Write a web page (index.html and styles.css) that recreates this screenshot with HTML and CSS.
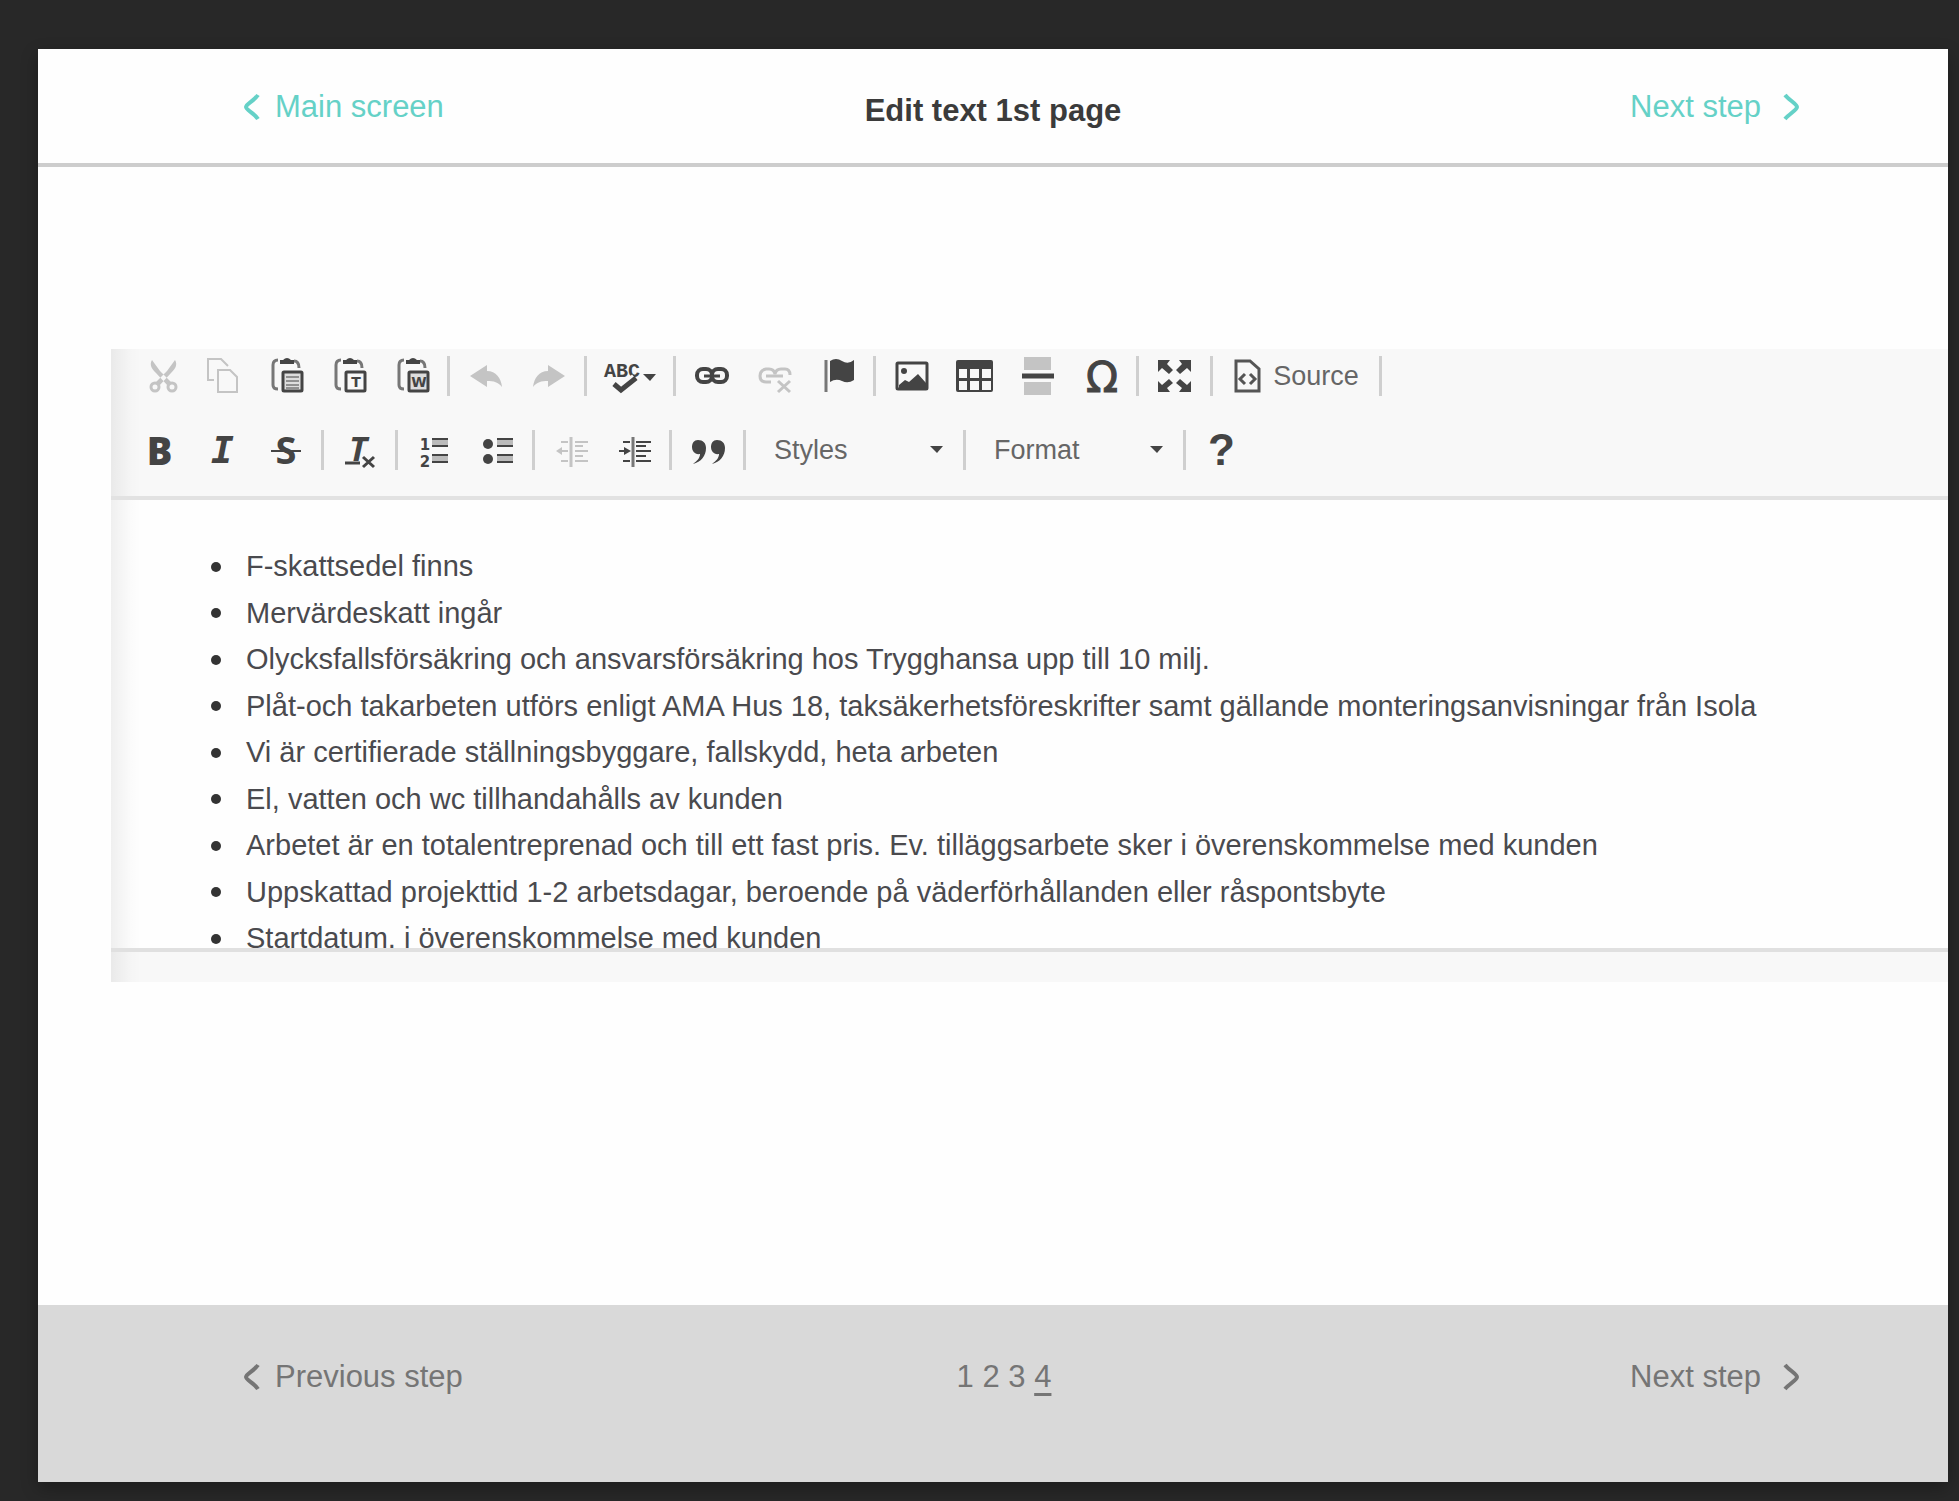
FILE: index.html
```html
<!DOCTYPE html>
<html lang="en">
<head>
<meta charset="utf-8">
<meta name="viewport" content="width=device-width, initial-scale=1">
<title>Edit text 1st page</title>
<link rel="stylesheet" href="styles.css">
</head>
<body>
<div class="window">
  <header class="bar header">
    <a class="step step-back" href="#main">
      <svg class="chevron" viewBox="0 0 18 28" aria-hidden="true"><path d="M16 2C12 8 4 11 4 14C4 17 12 20 16 26"/></svg>
      Main screen
    </a>
    <h1 class="title">Edit text 1st page</h1>
    <a class="step step-next" href="#next">
      Next step
      <svg class="chevron" viewBox="0 0 18 28" aria-hidden="true"><path d="M3 2C7 7 15 11 15 14C15 17 7 21 3 26"/></svg>
    </a>
  </header>

  <main class="main">
    <section class="editor" aria-label="Text editor">
      <div class="toolbar shade" role="toolbar" aria-label="Formatting">
        <div class="row">
          <button class="tool off" aria-label="Cut" disabled><svg class="icon" viewBox="0 0 40 40"><path class="fill" d="M12 4C9 9 12 13 16 17L28 30L32 27L20 15ZM35 4C38 9 35 13 31 17L19 30L15 27L27 15Z"/><circle class="line" cx="15" cy="31" r="4"/><circle class="line" cx="32" cy="31" r="4"/></svg></button>
          <button class="tool off" aria-label="Copy" disabled><svg class="icon" viewBox="0 0 40 40"><path class="line thin" d="M11 24H5V3H18L25 10M15 14H27L34 21V36H15Z"/></svg></button>
          <button class="tool" aria-label="Paste"><svg class="icon" viewBox="0 0 40 40"><path class="line soft" d="M12 4Q7 4 7 9V29Q7 33 12 33M28 5Q33 5 33 12"/><path class="fill" d="M14 8V4H17Q21 0 25 4H28V8Z"/><rect class="line frame" x="17" y="16" width="19" height="19" rx="1"/><path class="line hair" d="M20 21H33M20 25H33M20 29H33M20 32H33"/></svg></button>
          <button class="tool" aria-label="Paste as plain text"><svg class="icon" viewBox="0 0 40 40"><path class="line soft" d="M12 4Q7 4 7 9V29Q7 33 12 33M28 5Q33 5 33 12"/><path class="fill" d="M14 8V4H17Q21 0 25 4H28V8Z"/><rect class="line" x="17" y="16" width="19" height="19" rx="1"/><text class="mini" x="27" y="31">T</text></svg></button>
          <button class="tool" aria-label="Paste from Word"><svg class="icon" viewBox="0 0 40 40"><path class="line soft" d="M12 4Q7 4 7 9V29Q7 33 12 33M28 5Q33 5 33 12"/><path class="fill" d="M14 8V4H17Q21 0 25 4H28V8Z"/><rect class="line frame" x="17" y="16" width="19" height="19" rx="1"/><text class="mini" x="27" y="31">W</text></svg></button>
          <span class="sep"></span>
          <button class="tool off" aria-label="Undo" disabled><svg class="icon" viewBox="0 0 40 40"><path class="fill" d="M4 20L21 9V15C30 15 35 22 36 31C32 26 28 25 21 25V31Z"/></svg></button>
          <button class="tool off" aria-label="Redo" disabled><svg class="icon" viewBox="0 0 40 40"><path class="fill" d="M36 20L19 9V15C10 15 5 22 4 31C8 26 12 25 19 25V31Z"/></svg></button>
          <span class="sep"></span>
          <button class="tool spell" aria-label="Spell check"><svg class="icon wide" viewBox="0 0 58 40"><text class="abc" x="21" y="21">ABC</text><path class="halo" d="M13 28L20 34L34 22"/><path class="line thick" d="M13 28L20 34L35 22"/><path class="fill" d="M42 18H55L49 25Z"/></svg></button>
          <span class="sep"></span>
          <button class="tool" aria-label="Link"><svg class="icon" viewBox="0 0 40 40"><rect class="line link" x="5" y="13" width="15" height="13" rx="6"/><rect class="line link" x="20" y="13" width="15" height="13" rx="6"/><path class="line" d="M12 20H28"/></svg></button>
          <button class="tool off" aria-label="Unlink" disabled><svg class="icon" viewBox="0 0 40 40"><path class="line link" d="M16 26H11Q5 26 5 20T11 13H14Q19 13 20 18Q21 13 26 13H30Q35 13 35 19M11 20H28"/><path class="line" d="M23 25L35 36M35 25L23 36"/></svg></button>
          <button class="tool" aria-label="Anchor"><svg class="icon" viewBox="0 0 40 40"><path class="line soft" d="M8 4V36"/><path class="fill" d="M12 5Q18 1 24 5T36 4V24Q30 28 24 25T12 26Z"/></svg></button>
          <span class="sep"></span>
          <button class="tool" aria-label="Image"><svg class="icon" viewBox="0 0 40 40"><rect class="line" x="5" y="7" width="30" height="26" rx="1"/><circle class="fill" cx="12" cy="15" r="3"/><path class="fill" d="M7 32V29L13 24L17 26L26 18L34 27V32Z"/></svg></button>
          <button class="tool" aria-label="Table"><svg class="icon" viewBox="0 0 40 40"><path class="fill" fill-rule="evenodd" d="M3 4H36Q38 4 38 6V34Q38 36 36 36H3Q1 36 1 34V6Q1 4 3 4ZM4 13V22H12V13ZM15 13V22H24V13ZM27 13V22H36V13ZM4 25V34H12V25ZM15 25V34H24V25ZM27 25V34H36V25Z"/></svg></button>
          <button class="tool" aria-label="Horizontal line"><svg class="icon" viewBox="0 0 40 40"><path class="stripe" d="M6 1H33V14H6ZM6 26H33V39H6Z"/><path class="line thick" d="M4 20H36"/></svg></button>
          <button class="tool" aria-label="Special character"><svg class="icon" viewBox="0 0 40 40"><text class="omega" x="21" y="36">Ω</text></svg></button>
          <span class="sep"></span>
          <button class="tool" aria-label="Maximize"><svg class="icon" viewBox="0 0 40 40"><path class="fill" d="M3 4H15L12 8L18 14L14 18L7 12L3 16ZM36 4H24L27 8L21 14L25 18L32 12L36 16ZM3 36H15L12 32L18 27L14 23L7 29L3 25ZM36 36H24L27 32L21 27L25 23L32 29L36 25Z"/></svg></button>
          <span class="sep"></span>
          <button class="tool source"><svg class="icon doc" viewBox="0 0 28 40" aria-hidden="true"><path class="line" d="M3 5H17L26 13V35H3Z"/><path class="line" d="M12 18L7 23L12 28M17 18L22 23L17 28"/></svg>Source</button>
          <span class="sep"></span>
        </div>
        <div class="row">
          <button class="tool letter" aria-label="Bold"><b>B</b></button>
          <button class="tool letter italic" aria-label="Italic"><i>I</i></button>
          <button class="tool" aria-label="Strikethrough"><svg class="icon" viewBox="0 0 40 40"><text class="strike" x="20" y="34">S</text><path class="line thin" d="M5 21H35"/></svg></button>
          <span class="sep"></span>
          <button class="tool" aria-label="Remove format"><svg class="icon" viewBox="0 0 40 40"><text class="clear" x="18" y="31">T</text><path class="line" d="M5 33H20"/><path class="line" d="M23 27L34 37M34 27L23 37"/></svg></button>
          <span class="sep"></span>
          <button class="tool" aria-label="Numbered list"><svg class="icon" viewBox="0 0 40 40"><text class="num" x="11" y="20">1</text><text class="num" x="11" y="37">2</text><path class="band" d="M18 9H34V16H18ZM18 25H34V32H18Z"/><path class="line thin" d="M18 9H34M18 16H34M18 25H34M18 32H34"/></svg></button>
          <button class="tool" aria-label="Bulleted list"><svg class="icon" viewBox="0 0 40 40"><circle class="fill" cx="11" cy="14" r="5"/><circle class="fill" cx="11" cy="29" r="5"/><path class="band" d="M20 9H36V16H20ZM20 25H36V32H20Z"/><path class="line thin" d="M20 9H36M20 16H36M20 25H36M20 32H36"/></svg></button>
          <span class="sep"></span>
          <button class="tool off" aria-label="Decrease indent" disabled><svg class="icon" viewBox="0 0 40 40"><path class="line" d="M20 7V37"/><path class="line thin" d="M10 12H17M10 31H17M9 21H17M24 12H37M24 16H32M24 21H37M24 26H32M24 31H37"/><path class="fill" d="M5 21L11 17V25Z"/></svg></button>
          <button class="tool" aria-label="Increase indent"><svg class="icon" viewBox="0 0 40 40"><path class="line soft" d="M19 7V37"/><path class="line thin" d="M9 12H16M9 31H16M5 21H12M22 12H37M22 16H32M22 21H37M22 26H32M22 31H37"/><path class="fill" d="M17 21L10 17V25Z"/></svg></button>
          <span class="sep"></span>
          <button class="tool" aria-label="Block quote"><svg class="icon" viewBox="0 0 40 40"><path class="fill" d="M10 10C15 10 18 13 18 18C18 26 13 32 5 34C9 31 12 28 12 24C7 25 4 21 4 17C4 13 6 10 10 10ZM29 10C34 10 37 13 37 18C37 26 32 32 24 34C28 31 31 28 31 24C26 25 23 21 23 17C23 13 25 10 29 10Z"/></svg></button>
          <span class="sep"></span>
          <span class="combo">
            <select aria-label="Styles"><option>Styles</option></select>
            <svg class="caret" viewBox="0 0 13 8" aria-hidden="true"><path class="fill" d="M0 0H13L7 7Z"/></svg>
          </span>
          <span class="sep"></span>
          <span class="combo">
            <select aria-label="Format"><option>Format</option></select>
            <svg class="caret" viewBox="0 0 13 8" aria-hidden="true"><path class="fill" d="M0 0H13L7 7Z"/></svg>
          </span>
          <span class="sep"></span>
          <button class="tool letter help" aria-label="Help"><b>?</b></button>
        </div>
      </div>
      <div class="content shade" contenteditable="true" role="textbox" aria-multiline="true" aria-label="Page text" lang="sv" spellcheck="false">
        <ul class="list">
          <li>F-skattsedel finns</li>
          <li>Mervärdeskatt ingår</li>
          <li>Olycksfallsförsäkring och ansvarsförsäkring hos Trygghansa upp till 10 milj.</li>
          <li>Plåt-och takarbeten utförs enligt AMA Hus 18, taksäkerhetsföreskrifter samt gällande monteringsanvisningar från Isola</li>
          <li>Vi är certifierade ställningsbyggare, fallskydd, heta arbeten</li>
          <li>El, vatten och wc tillhandahålls av kunden</li>
          <li>Arbetet är en totalentreprenad och till ett fast pris. Ev. tilläggsarbete sker i överenskommelse med kunden</li>
          <li>Uppskattad projekttid 1-2 arbetsdagar, beroende på väderförhållanden eller råspontsbyte</li>
          <li>Startdatum, i överenskommelse med kunden</li>
        </ul>
      </div>
      <div class="status shade"></div>
    </section>
  </main>

  <footer class="bar footer">
    <a class="step step-back" href="#previous">
      <svg class="chevron" viewBox="0 0 18 28" aria-hidden="true"><path d="M16 2C12 8 4 11 4 14C4 17 12 20 16 26"/></svg>
      Previous step
    </a>
    <nav class="pages" aria-label="Pages">
      <a href="#1">1</a> <a href="#2">2</a> <a href="#3">3</a> <a class="current" href="#4" aria-current="page">4</a>
    </nav>
    <a class="step step-next" href="#next">
      Next step
      <svg class="chevron" viewBox="0 0 18 28" aria-hidden="true"><path d="M3 2C7 7 15 11 15 14C15 17 7 21 3 26"/></svg>
    </a>
  </footer>
</div>
</body>
</html>
```
FILE: styles.css
```css
* { box-sizing: border-box; }

body {
  display: flex;
  min-height: 100vh;
  margin: 0;
  padding: 49px 11px 19px 38px;
  background: #282828;
  font-family: "Liberation Sans", Arial, sans-serif;
}

.window {
  flex: 1;
  min-width: 0;
  display: flex;
  flex-direction: column;
  background: #fefefe;
  box-shadow: 0 6px 16px rgba(0, 0, 0, 0.3);
}

/* Header and footer bars */
.bar {
  display: grid;
  grid-template-columns: 1fr auto 1fr;
  font-size: 31px;
  line-height: 36px;
}

.header {
  align-items: center;
  height: 118px;
  padding-top: 2px;
  border-bottom: 4px solid #cdcdcd;
  color: #65d1c7;
}

.footer {
  align-items: start;
  height: 177px;
  padding-top: 54px;
  background: #d9d9d9;
  color: #757575;
}

.title {
  margin: 0;
  padding-top: 8px;
  color: #3b3b3b;
  font-size: 31px;
  line-height: 36px;
}

.step {
  display: flex;
  align-items: center;
  color: inherit;
  text-decoration: none;
}

.step-back {
  justify-self: start;
  gap: 15px;
  margin-left: 204px;
}

.step-next {
  justify-self: end;
  gap: 21px;
  margin-right: 148px;
}

.chevron {
  width: 18px;
  height: 28px;
  fill: none;
  stroke: currentColor;
  stroke-width: 4;
}

.pages { padding-left: 22px; }

.pages a {
  color: inherit;
  text-decoration: none;
}

.pages .current {
  text-decoration: underline;
  text-decoration-thickness: 3px;
  text-underline-offset: 6px;
}

/* Editor */
.main {
  flex: 1;
  padding: 182px 0 0 73px;
}

.shade {
  background-image: linear-gradient(to right, rgba(0, 0, 0, 0.06), rgba(0, 0, 0, 0.01) 20px, transparent 30px);
}

.toolbar {
  display: flex;
  flex-direction: column;
  gap: 34px;
  padding: 7px 0 26px 17px;
  border-bottom: 4px solid #e2e2e2;
  background-color: #f8f8f8;
}

.row {
  display: flex;
  height: 40px;
}

.tool {
  display: flex;
  align-items: center;
  justify-content: center;
  width: 63px;
  height: 40px;
  padding: 0;
  border: 0;
  background: none;
  color: #444;
  font: 27px/40px "Liberation Sans", Arial, sans-serif;
}

.off { color: #c4c4c4; }
.spell { width: 78px; }

.source {
  width: 158px;
  gap: 12px;
  color: #666;
}

.sep {
  width: 3px;
  margin: 0 4px;
  background: #cfcfcf;
}

.letter { font: 700 38px/40px "Open Sans", "Noto Sans", sans-serif; }
.italic { font-family: "DejaVu Sans Mono", monospace; }
.help { font: 700 44px/44px "Liberation Sans", Arial, sans-serif; }

.icon {
  width: 40px;
  height: 40px;
  overflow: visible;
}

.wide { width: 58px; }

.doc {
  width: 28px;
  color: #555;
}

.fill { fill: currentColor; }

.line {
  fill: none;
  stroke: currentColor;
  stroke-width: 3;
}

.thin { stroke-width: 2; }
.hair { stroke-width: 1; }
.thick { stroke-width: 5; }
.link { stroke-width: 4; }
.soft { stroke: #777; }
.frame { fill: #ddd; }
.off .link { stroke-width: 3; }
.band { fill: #bbb; }
.stripe { fill: #c4c4c4; }

.halo {
  fill: none;
  stroke: #f8f8f8;
  stroke-width: 9;
}

.mini,
.abc,
.omega,
.clear,
.strike,
.num {
  fill: currentColor;
  font-family: "DejaVu Sans", sans-serif;
  font-weight: 700;
  text-anchor: middle;
}

.mini { font-size: 14px; }
.abc { font: 700 20px "Liberation Mono", monospace; }
.omega { font-size: 42px; font-weight: 400; stroke: currentColor; }
.clear { font: italic 700 34px "Open Sans", sans-serif; }
.strike { font: 700 38px "Open Sans", sans-serif; }
.num { font-size: 15px; }

.combo {
  display: grid;
  align-items: center;
  width: 209px;
}

.combo select {
  grid-area: 1 / 1;
  width: 100%;
  height: 40px;
  padding: 0 50px 0 24px;
  border: 0;
  background: none;
  appearance: none;
  color: #666;
  font: 27px/40px "Liberation Sans", Arial, sans-serif;
}

.caret {
  grid-area: 1 / 1;
  justify-self: end;
  width: 13px;
  height: 8px;
  margin-right: 16px;
  color: #444;
  pointer-events: none;
}

.content {
  height: 448px;
  padding: 43px 0 0 100px;
  overflow: hidden;
  color: #4a4a4e;
  font-size: 29px;
  line-height: 47px;
}

.list {
  margin: 0;
  padding: 0;
  list-style: none;
}

.list li {
  display: flex;
  align-items: center;
  gap: 25px;
}

.list li:nth-child(even) { line-height: 46px; }

.list li::before {
  content: "";
  flex: none;
  width: 10px;
  height: 10px;
  border-radius: 50%;
  background: #333;
}

.status {
  height: 34px;
  border-top: 4px solid #e0e0e0;
  background-color: #f8f8f8;
}
```
